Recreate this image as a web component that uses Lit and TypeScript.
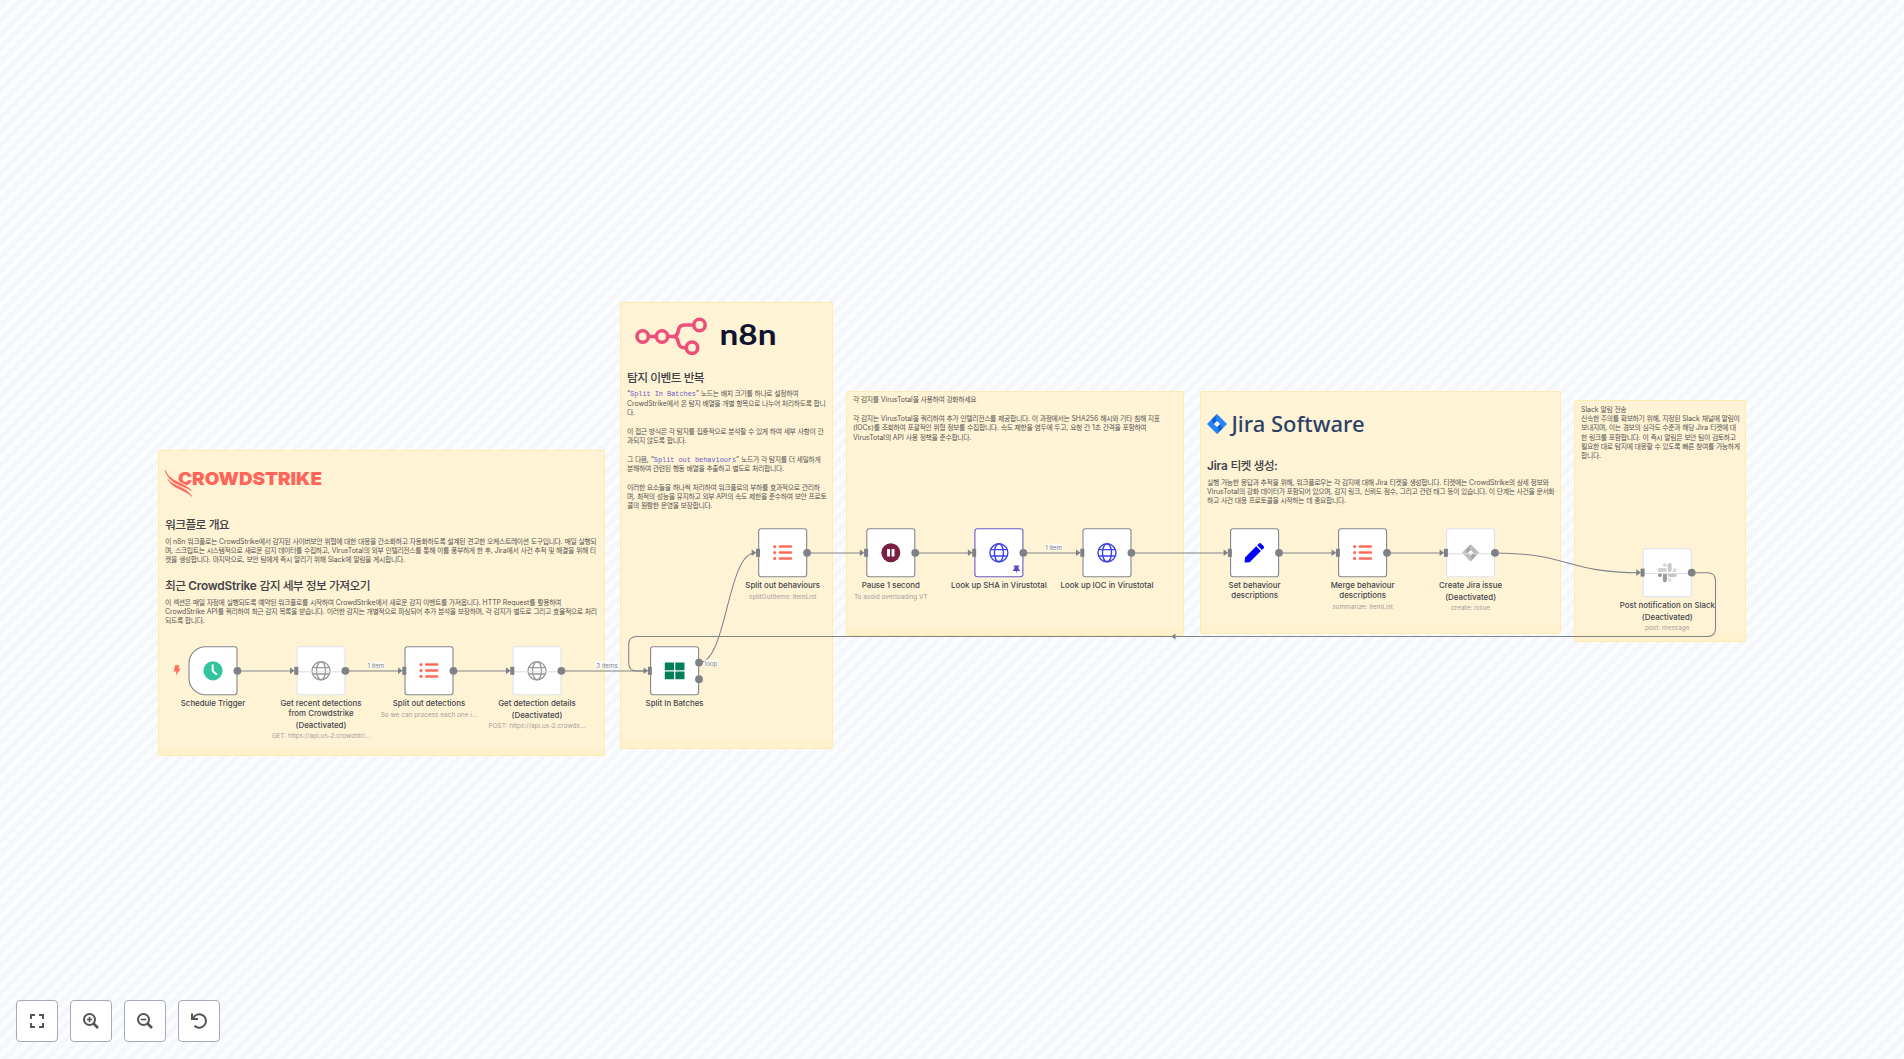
import { LitElement, html, svg, css, nothing } from "lit";
import { customElement, property } from "lit/decorators.js";
import { styleMap } from "lit/directives/style-map.js";

type IconName = "clock" | "globe" | "list" | "grid" | "pause" | "pencil" | "jira" | "slack";

interface FlowNode {
  x: number; // centre
  y: number;
  icon: IconName;
  label: string[];
  sub?: string;
  color?: string;
  disabled?: boolean;
  trigger?: boolean;
  pinned?: boolean;
  outputs?: number[];
}

const NODES: FlowNode[] = [
  { x: 213, y: 670.8, icon: "clock", label: ["Schedule Trigger"], trigger: true },
  { x: 321, y: 670.8, icon: "globe", color: "#999b9d", label: ["Get recent detections", "from Crowdstrike"], disabled: true, sub: "GET: https://api.us-2.crowdstri..." },
  { x: 429, y: 670.8, icon: "list", label: ["Split out detections"], sub: "So we can process each one i..." },
  { x: 537, y: 670.8, icon: "globe", color: "#999b9d", label: ["Get detection details"], disabled: true, sub: "POST: https://api.us-2.crowds..." },
  { x: 674.6, y: 670.8, icon: "grid", label: ["Split In Batches"], outputs: [-8.2, 8.4] },
  { x: 782.7, y: 552.8, icon: "list", label: ["Split out behaviours"], sub: "splitOutItems: itemList" },
  { x: 890.8, y: 552.8, icon: "pause", label: ["Pause 1 second"], sub: "To avoid overloading VT" },
  { x: 998.9, y: 552.8, icon: "globe", color: "#3b43e6", label: ["Look up SHA in Virustotal"], pinned: true },
  { x: 1107, y: 552.8, icon: "globe", color: "#3b43e6", label: ["Look up IOC in Virustotal"] },
  { x: 1254.6, y: 552.8, icon: "pencil", label: ["Set behaviour", "descriptions"] },
  { x: 1362.6, y: 552.8, icon: "list", label: ["Merge behaviour", "descriptions"], sub: "summarize: itemList" },
  { x: 1470.6, y: 552.8, icon: "jira", label: ["Create Jira issue"], disabled: true, sub: "create: issue" },
  { x: 1667.3, y: 572.6, icon: "slack", label: ["Post notification on Slack"], disabled: true, sub: "post: message" },
];

const EDGES: string[] = [
  "M237 671H292",
  "M345 671H400",
  "M453 671H508",
  "M561 671H646",
  "M699 662.7C727 662.7 727 553 755 553",
  "M807 553H862",
  "M915 553H970",
  "M1023 553H1078",
  "M1131 553H1226",
  "M1279 553H1334",
  "M1387 553H1442",
  "M1495 553C1567 553 1567 572.7 1639 572.7",
  "M1692 572.7H1707.5Q1715.5 572.7 1715.5 580.7V628.5Q1715.5 636.5 1707.5 636.5H636.7Q628.7 636.5 628.7 644.5V663Q628.7 671 636.7 671H646",
];

const EDGE_LABELS = [
  { x: 375.8, y: 664.8, text: "1 item" },
  { x: 607, y: 664.8, text: "3 items" },
  { x: 711, y: 662.9, text: "loop" },
  { x: 1053.5, y: 546.8, text: "1 item" },
];

const ICONS = {
  clock: () => svg`<circle r="9.6" fill="#31c49f"/><path d="M-.3-5.6V.3L3.4 3.4" fill="none" stroke="#fff" stroke-width="2" stroke-linecap="round"/>`,
  globe: (c: string) => svg`<g fill="none" stroke=${c} stroke-width="1.4"><circle r="9"/><ellipse rx="4.5" ry="9"/><path d="M-8.5-3.2H8.5M-8.5 3.2H8.5"/></g>`,
  list: () => svg`<g fill="#ff6d5a"><circle cx="-8" cy="-6.2" r="1.6"/><circle cx="-8" cy="-.2" r="1.6"/><circle cx="-8" cy="5.6" r="1.6"/><rect x="-4" y="-7.5" width="13.4" height="2.5" rx="1"/><rect x="-4" y="-1.5" width="13.4" height="2.5" rx="1"/><rect x="-4" y="4.4" width="13.4" height="2.5" rx="1"/></g>`,
  grid: () => svg`<g fill="#007f58"><rect x="-9.8" y="-8.3" width="9.2" height="7.8" rx=".6"/><rect x=".7" y="-8.3" width="9.2" height="7.8" rx=".6"/><rect x="-9.8" y=".7" width="9.2" height="7.8" rx=".6"/><rect x=".7" y=".7" width="9.2" height="7.8" rx=".6"/></g>`,
  pause: () => svg`<circle r="9.5" fill="#7a1f41"/><rect x="-3.7" y="-3.9" width="2.9" height="7.6" rx=".4" fill="#fff"/><rect x=".8" y="-3.9" width="2.9" height="7.6" rx=".4" fill="#fff"/>`,
  pencil: () => svg`<path d="M-10 9.8 -9.6 4.7 1.6-6.5 6.3-1.8-4.9 9.4ZM2.6-7.5 4.4-9.3Q5.4-10.3 6.4-9.3L9.1-6.6Q10.1-5.6 9.1-4.6L7.3-2.8Z" fill="#0000fb"/>`,
  jira: () => svg`<path d="M0-8.6 8.6 0 0 8.6-8.6 0Z" fill="#bcbcbc"/><path d="M0-8.6Q-2.6-5 0-2.6L-2.8 0-5-2.4ZM0 8.6Q2.6 5 0 2.6L2.8 0 5 2.4Z" fill="#a4a4a4"/><path d="M0-2.7 2.7 0 0 2.7-2.7 0Z" fill="#fff"/>`,
  slack: () => svg`<g><rect x=".4" y="-9.6" width="4" height="9" rx="2" fill="#c9c9c9"/><path d="M-4.4-7.6a2 2 0 0 1 4 0v2h-2a2 2 0 0 1-2-2z" fill="#dedede"/><rect x="-9.6" y="-4.5" width="9.2" height="4" rx="2" fill="#d2d2d2"/><path d="M5.4-2.5a2 2 0 1 1 2 2h-2z" fill="#dadada"/><rect x=".4" y=".4" width="9.2" height="4" rx="2" fill="#c4c4c4"/><path d="M-5.4 2.4a2 2 0 1 1-2-2h2z" fill="#8e8e8e"/><rect x="-4.4" y=".4" width="4" height="9.2" rx="2" fill="#9b9b9b"/><path d="M.4 5.4h2a2 2 0 1 1-2 2z" fill="#e2e2e2"/></g>`,
};

const INTER = css`"Inter", "Noto Sans CJK KR", sans-serif`;

// Wraps Hangul runs so that they can be tracked tighter than the Latin text,
// sets `code` spans, and breaks lines at "\n".
const rich = (text: string) =>
  text.split(/(`[^`]+`|[\uac00-\ud7a3]+|\n)/).map((part) => {
    if (part === "\n") return html`<br />`;
    if (part.startsWith("`")) return html`<code>${part.slice(1, -1)}</code>`;
    if (/^[\uac00-\ud7a3]/.test(part)) return html`<span class="ko">${part}</span>`;
    return part;
  });

@customElement("flow-node")
class FlowNodeEl extends LitElement {
  @property({ attribute: false }) node!: FlowNode;

  static styles = css`
    :host { display: block; width: 49px; font-family: ${INTER}; }
    .box { display: block; width: 49px; height: 49px; overflow: visible; }
    .text { display: flex; flex-direction: column; align-items: center; margin: 2.7px -50px 0; white-space: nowrap; text-align: center; }
    .name { font-size: 7.86px; font-weight: 500; line-height: 10px; color: #45464c; }
    .state { line-height: 14px; }
    .sub { margin-top: 3.2px; font-size: 6.45px; line-height: 8px; color: #a3a09b; }
    .state + .sub { margin-top: .4px; }
  `;

  render() {
    const n = this.node;
    const border = n.disabled ? "#dfe2ea" : n.pinned ? "#6b5cc9" : "#84878c";
    const shape = n.trigger
      ? "M-7.5-24H21.5Q24-24 24-21.5V21.5Q24 24 21.5 24H-7.5A16.5 16.5 0 0 1-24 7.5V-7.5A16.5 16.5 0 0 1-7.5-24Z"
      : "M-21.5-24H21.5Q24-24 24-21.5V21.5Q24 24 21.5 24H-21.5Q-24 24-24 21.5V-21.5Q-24-24-21.5-24Z";
    return html`
      <svg class="box" viewBox="-24.5 -24.5 49 49">
        <path d=${shape} fill="#fff" stroke=${border} stroke-width="1.1" />
        ${ICONS[n.icon](n.color ?? "")}
        ${n.disabled ? svg`<path d="M-24 1H24" stroke="#d9dce6" stroke-width="1"/>` : nothing}
        ${n.trigger
          ? svg`<path d="M-37.9-5.500H-33.700L-34.700-2.400H-32.300L-37.400 5.300-36.500.8H-39.200Z" fill="#ff6d5a"/>`
          : svg`<path d="M-31-3.3V3.3L-26.4 0Z" fill="#7e8186"/><rect x="-26.7" y="-4" width="4" height="8" fill="#7e8186"/>`}
        ${(n.outputs ?? [0]).map((o) => svg`<circle cx="24.4" cy=${o} r="3.9" fill="#7e8186"/>`)}
        ${n.pinned ? svg`<path d="M14.8 12.8h5.4v1.1h-.8l.3 2.4q1.3.7 1.3 2h-3l-.5 2.6-.5-2.6h-3q0-1.3 1.3-2l.3-2.4h-.8z" fill="#5a4bbd"/>` : nothing}
      </svg>
      <div class="text">
        ${n.label.map((l) => html`<div class="name">${l}</div>`)}
        ${n.disabled ? html`<div class="name state">(Deactivated)</div>` : nothing}
        ${n.sub ? html`<div class="sub">${n.sub}</div>` : nothing}
      </div>
    `;
  }
}

@customElement("app-root")
class AppRoot extends LitElement {
  static styles = css`
    :host { display: block; }
    .canvas {
      position: relative; width: 100%; height: 1059px; overflow: hidden;
      font-family: ${INTER};
      background: repeating-linear-gradient(135deg, #fbfcfe 0 1.5px, #f4f6fb 3.5px 6.4px, #fbfcfe 8.4px 9.83px);
    }
    .sticky {
      position: absolute; box-sizing: border-box; padding: 0 6px;
      border: 1px solid #ffebac; border-radius: 2px;
      background: linear-gradient(#fff3d6 0 0) top / 100% calc(100% - 8px) no-repeat, linear-gradient(#fff1ce, #fff1ce);
      color: #56544f; white-space: nowrap;
    }
    .s1 { left: 158px; top: 449.5px; width: 447px; height: 306.5px; }
    .s2 { left: 620px; top: 302px; width: 213px; height: 447px; }
    .s3 { left: 846px; top: 391px; width: 337.5px; height: 245px; }
    .s4 { left: 1200px; top: 391px; width: 361px; height: 243px; }
    .s5 { left: 1574px; top: 400px; width: 172px; height: 242px; }
    h2 { margin: 0; font-size: 11.8px; font-weight: 600; line-height: 14px; letter-spacing: -.015em; color: #424247; }
    h2 .ko { letter-spacing: -.055em; font-weight: 500; }
    p { margin: 0; font-size: 6.87px; line-height: 9.05px; }
    .ko { letter-spacing: -.05em; }
    code { font-family: "Liberation Mono", monospace; font-size: 6.87px; line-height: 1; color: #6a5bc4; }
    .logo { display: block; overflow: visible; }
    .s1 .logo { margin-top: 19.5px; width: 160px; height: 27px; }
    .s1 h2 { margin-top: 20.5px; }
    .s1 p { margin-top: 5px; }
    .s1 p + h2 { margin-top: 15px; }
    .s2 .logo { margin-top: 13px; width: 160px; height: 40px; }
    .s2 h2 { margin-top: 14.7px; }
    .s2 p { margin-top: 9.7px; line-height: 9.2px; }
    .s2 h2 + p { margin-top: 4.7px; }
    .s3 p { margin-top: 9.7px; line-height: 9.3px; }
    .s3 p:first-child { margin-top: 3px; }
    .s4 .logo { margin-top: 22px; width: 160px; height: 20px; }
    .s4 h2 { margin-top: 24.7px; }
    .s4 p { margin-top: 5px; line-height: 9px; }
    .s5 p { margin-top: 4px; line-height: 9.2px; }
    .edges { position: absolute; inset: 0; width: 100%; height: 100%; }
    .node { position: absolute; left: 0; top: 0; }
    .edge-label {
      position: absolute; transform: translate(-50%, -50%); padding: 0 .5px;
      font-size: 6.2px; line-height: 7px; white-space: nowrap; color: #7c7f86;
      background: rgba(251, 252, 254, .8); border-radius: 1px;
    }
    .controls { position: absolute; left: 16px; bottom: 17px; display: flex; gap: 12px; }
    .control {
      box-sizing: border-box; width: 42px; height: 42px; padding: 0; display: grid; place-items: center;
      border: 1px solid #a4a8b9; border-radius: 4px; background: #fff;
    }
    .control svg { display: block; width: 16px; height: 16px; }
  `;

  private stickies() {
    return html`
      <section class="sticky s1">
        <svg class="logo" viewBox="0 0 160 27">
          <text x="13" y="14.9" font-family="Inter" font-weight="900" font-size="18" textLength="144" lengthAdjust="spacingAndGlyphs" fill="#ff6558">CROWDSTRIKE</text>
          <path d="M0 .5C5 12 18 12 27 20.5 19 15.5 5 15 0 .5Z" fill="#ff6558" stroke="#fff3d6" stroke-width="2.2"/>
          <path d="M0 .5C5 12 18 12 26.5 20.5 19 15.5 5 15 0 .5Z" fill="#ff6558" stroke="#ff6558" stroke-width=".7"/>
          <path d="M3 9.5C9 17 20 16 27 26.5 20 19.5 8 19 3 9.5Z" fill="#ff6558" stroke="#ff6558" stroke-width=".6"/>
        </svg>
        <h2>${rich("워크플로 개요")}</h2>
        <p>${rich("이 n8n 워크플로는 CrowdStrike에서 감지된 사이버보안 위협에 대한 대응을 간소화하고 자동화하도록 설계된 견고한 오케스트레이션 도구입니다. 매일 실행되\n며, 스크립트는 시스템적으로 새로운 감지 데이터를 수집하고, VirusTotal의 외부 인텔리전스를 통해 이를 풍부하게 한 후, Jira에서 사건 추적 및 해결을 위해 티\n켓을 생성합니다. 마지막으로, 보안 팀에게 즉시 알리기 위해 Slack에 알림을 게시합니다.")}</p>
        <h2>${rich("최근 CrowdStrike 감지 세부 정보 가져오기")}</h2>
        <p>${rich("이 섹션은 매일 자정에 실행되도록 예약된 워크플로를 시작하여 CrowdStrike에서 새로운 감지 이벤트를 가져옵니다. HTTP Request를 활용하여\nCrowdStrike API를 쿼리하여 최근 감지 목록을 받습니다. 이러한 감지는 개별적으로 파싱되어 추가 분석을 보장하며, 각 감지가 별도로 그리고 효율적으로 처리\n되도록 합니다.")}</p>
      </section>
      <section class="sticky s2">
        <svg class="logo" viewBox="0 0 160 40">
          <g fill="none" stroke="#ee4f78" stroke-width="3.6">
            <circle cx="15.7" cy="20.5" r="5.7"/><circle cx="35" cy="20.5" r="5.7"/><circle cx="72.5" cy="9" r="5.7"/><circle cx="65" cy="31.7" r="5.7"/>
            <path d="M21.5 20.5H29.5M40.5 20.5H46Q50 20.5 51 16L51.5 14Q52.5 9 57 9H67M46 20.5Q50 20.5 51 25L51.5 27Q52.5 31.7 57 31.7H59.5"/>
          </g>
          <text x="92.5" y="28.5" font-family="Lato" font-weight="700" font-size="28" textLength="57" lengthAdjust="spacingAndGlyphs" fill="#101330">n8n</text>
        </svg>
        <h2>${rich("탐지 이벤트 반복")}</h2>
        <p>${rich("“`Split In Batches`” 노드는 배치 크기를 하나로 설정하여\nCrowdStrike에서 온 탐지 배열을 개별 항목으로 나누어 처리하도록 합니\n다.")}</p>
        <p>${rich("이 접근 방식은 각 탐지를 집중적으로 분석할 수 있게 하여 세부 사항이 간\n과되지 않도록 합니다.")}</p>
        <p>${rich("그 다음, “`Split out behaviours`” 노드가 각 탐지를 더 세밀하게\n분해하여 관련된 행동 배열을 추출하고 별도로 처리합니다.")}</p>
        <p>${rich("이러한 요소들을 하나씩 처리하여 워크플로의 부하를 효과적으로 관리하\n며, 최적의 성능을 유지하고 외부 API의 속도 제한을 준수하여 보안 프로토\n콜의 원활한 운영을 보장합니다.")}</p>
      </section>
      <section class="sticky s3">
        <p>${rich("각 감지를 VirusTotal을 사용하여 강화하세요")}</p>
        <p>${rich("각 감지는 VirusTotal을 쿼리하여 추가 인텔리전스를 제공합니다. 이 과정에서는 SHA256 해시와 기타 침해 지표\n(IOCs)를 조회하여 포괄적인 위협 정보를 수집합니다. 속도 제한을 염두에 두고, 요청 간 1초 간격을 포함하여\nVirusTotal의 API 사용 정책을 준수합니다.")}</p>
      </section>
      <section class="sticky s4">
        <svg class="logo" viewBox="0 0 160 20">
          <path d="M10 0 20 10 10 20 0 10Z" fill="#2684ff"/>
          <path d="M10 0Q7 4 10 7L6.7 10 4.6 5.4ZM10 20Q13 16 10 13L13.3 10 15.4 14.6Z" fill="#0f5fd8"/>
          <path d="M10 6.9 13.1 10 10 13.1 6.9 10Z" fill="#fff3d6"/>
          <text x="24.5" y="17.5" font-family="Noto Sans" font-weight="500" font-size="22.5" textLength="133" lengthAdjust="spacingAndGlyphs" fill="#2c4166">Jira Software</text>
        </svg>
        <h2>${rich("Jira 티켓 생성:")}</h2>
        <p>${rich("실행 가능한 응답과 추적을 위해, 워크플로우는 각 감지에 대해 Jira 티켓을 생성합니다. 티켓에는 CrowdStrike의 상세 정보와\nVirusTotal의 강화 데이터가 포함되어 있으며, 감지 링크, 신뢰도 점수, 그리고 관련 태그 등이 있습니다. 이 단계는 사건을 문서화\n하고 사건 대응 프로토콜을 시작하는 데 중요합니다.")}</p>
      </section>
      <section class="sticky s5">
        <p>${rich("Slack 알림 전송\n신속한 주의를 확보하기 위해, 지정된 Slack 채널에 알림이\n보내지며, 이는 경보의 심각도 수준과 해당 Jira 티켓에 대\n한 링크를 포함합니다. 이 즉시 알림은 보안 팀이 검토하고\n필요한 대로 탐지에 대응할 수 있도록 빠른 참여를 가능하게\n합니다.")}</p>
      </section>
    `;
  }

  render() {
    return html`
      <main class="canvas">
        ${this.stickies()}
        <svg class="edges">
          ${EDGES.map((d) => svg`<path d=${d} fill="none" stroke="#808388" stroke-width="1.05"/>`)}
          <path d="M1171 636.5 1175.5 633.5V639.5Z" fill="#7e8186" />
        </svg>
        ${NODES.map((n) => html`<flow-node class="node" .node=${n} style=${styleMap({ transform: `translate(${n.x - 24.5}px, ${n.y - 24.5}px)` })}></flow-node>`)}
        ${EDGE_LABELS.map((l) => html`<span class="edge-label" style=${styleMap({ left: `${l.x}px`, top: `${l.y}px` })}>${l.text}</span>`)}
        <nav class="controls">
          <button class="control" aria-label="Fit view"><svg viewBox="0 0 16 16" fill="none" stroke="#555" stroke-width="2"><path d="M2 6V2H6M10 2H14V6M14 10V14H10M6 14H2V10"/></svg></button>
          <button class="control" aria-label="Zoom in"><svg viewBox="0 0 16 16" fill="none" stroke="#555" stroke-width="2"><circle cx="6.5" cy="6.5" r="5.5"/><path d="M10.5 10.5 15 15" stroke-width="2.6"/><path d="M6.5 3.8V9.2M3.8 6.5H9.2" stroke-width="1.6"/></svg></button>
          <button class="control" aria-label="Zoom out"><svg viewBox="0 0 16 16" fill="none" stroke="#555" stroke-width="2"><circle cx="6.5" cy="6.5" r="5.5"/><path d="M10.5 10.5 15 15" stroke-width="2.6"/><path d="M3.8 6.5H9.2" stroke-width="1.6"/></svg></button>
          <button class="control" aria-label="Reset zoom"><svg viewBox="0 0 16 16" fill="none" stroke="#555" stroke-width="2"><path d="M1 .5V6H7" stroke-width="2.2"/><path d="M2 5.5A6.7 6.7 0 1 1 3.5 12.7"/></svg></button>
        </nav>
      </main>
    `;
  }
}
